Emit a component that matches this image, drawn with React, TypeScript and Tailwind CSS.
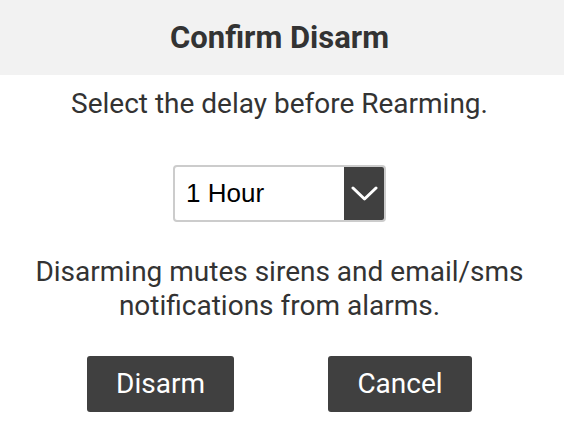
import React, { useState } from 'react';

const App: React.FC = () => {
  const [delay, setDelay] = useState('1 Hour');

  return (
    <div className="h-[430px] w-[564px] bg-white font-['Roboto',sans-serif] text-[#333333]">
      <div className="flex h-[75px] items-center justify-center bg-[#f2f2f2] pr-[5px]">
        <h2 className="text-[31px] font-bold leading-none">Confirm Disarm</h2>
      </div>

      <div className="pr-[5px]">
        <p className="mt-[12px] text-center text-[28px] leading-[34px]">Select the delay before Rearming.</p>

        <div className="mt-[44px] flex justify-center">
          <div className="relative h-[57px] w-[213px] overflow-hidden rounded-[4px] border-2 border-[#cccccc] bg-white">
            <select
              value={delay}
              onChange={(e) => setDelay(e.target.value)}
              className="h-full w-full appearance-none bg-transparent pl-[11px] font-['Liberation_Sans',Arial,sans-serif] text-[26px] text-black outline-none"
            >
              <option>1 Hour</option>
              <option>2 Hours</option>
              <option>4 Hours</option>
              <option>8 Hours</option>
            </select>
            <div className="pointer-events-none absolute inset-y-0 right-0 flex w-[40px] items-center justify-center bg-[#404040]">
              <svg width="27" height="16" viewBox="0 0 27 16" fill="none">
                <path d="M2 2L13.5 13L25 2" stroke="white" strokeWidth="3" strokeLinecap="round" strokeLinejoin="round" />
              </svg>
            </div>
          </div>
        </div>

        <p className="mt-[33px] text-center text-[28px] leading-[34px]">
          Disarming mutes sirens and email/sms
          <br />
          notifications from alarms.
        </p>

        <div className="mt-[33px] flex justify-center gap-[94px]">
          <button type="button" className="h-[56px] w-[147px] rounded-[3px] bg-[#404040] text-[28px] text-white">
            Disarm
          </button>
          <button type="button" className="h-[56px] w-[144px] rounded-[3px] bg-[#404040] text-[28px] text-white">
            Cancel
          </button>
        </div>
      </div>
    </div>
  );
};

export default App;
